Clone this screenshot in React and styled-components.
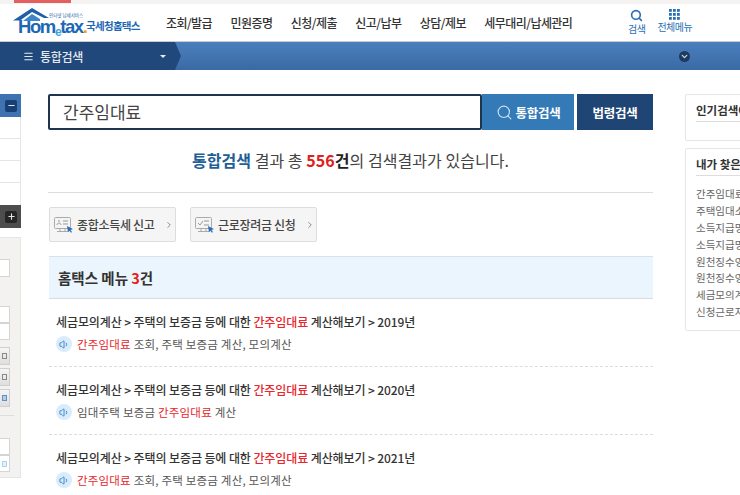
import React from "react";
import styled, { createGlobalStyle } from "styled-components";
import { Search, Menu, ChevronDown, ChevronRight, Plus, Minus, Volume1 } from "lucide-react";

const GlobalStyle = createGlobalStyle`
  html, body {
    margin: 0;
    height: 495px;
    overflow: hidden;
    background: #fff;
    font-family: "Noto Sans CJK KR", "Noto Sans", sans-serif;
    color: #333;
  }
  * { box-sizing: border-box; }
`;

const menus = ["조회/발급", "민원증명", "신청/제출", "신고/납부", "상담/제보", "세무대리/납세관리"];
const recent = ["간주임대료", "주택임대소득", "소득지급명세서", "소득지급명세서", "원천징수영수증", "원천징수영수증", "세금모의계산", "신청근로자녀"];

const results = [
  { year: 2019, sub: <><Hit>간주임대료</Hit> 조회, 주택 보증금 계산, 모의계산</> },
  { year: 2020, sub: <>임대주택 보증금 <Hit>간주임대료</Hit> 계산</> },
  { year: 2021, sub: <><Hit>간주임대료</Hit> 조회, 주택 보증금 계산, 모의계산</> },
];

function Hit({ children }) {
  return <HitText>{children}</HitText>;
}

function MonitorIcon({ check }) {
  return (
    <svg width="19" height="16" viewBox="0 0 19 16">
      <rect x="0.500" y="0.500" width="16" height="11" rx="1" fill="#f4f4f4" stroke="#aaa" />
      <path d="M6 12v2M11 12v2M3 14.500h11" stroke="#aaa" fill="none" />
      {check ? (
        <path d="M3 6l2 2 3-4M9 4h5M9 8h5" stroke="#999" fill="none" />
      ) : (
        <path d="M3 8c0-2.500 4-2.500 4 0M9 4h5M9 7h5M4 4h2" stroke="#999" fill="none" />
      )}
      <path d="M13 9l6 3-2.500 1 1.500 2-1 .800-1.500-2-1.500 1.500z" fill="#2b6cb5" />
    </svg>
  );
}

export default function App() {
  return (
    <>
      <GlobalStyle />
      <TopStrip><RedTab /></TopStrip>

      <Header>
        <Logo>
          <LogoMark>
            <svg width="36" height="13" viewBox="0 0 36 13">
              <path d="M0 12.500L19 0l17 10h-5L19 4 7 12.500z" fill="#1f5fa8" />
              <path d="M10 13l9-7 8 5v2z" fill="#3f86c8" />
            </svg>
            <LogoSlogan>인터넷 납세서비스</LogoSlogan>
          </LogoMark>
          <LogoWord>Hom<LogoE>e</LogoE>tax<LogoDot>.</LogoDot></LogoWord>
          <LogoName>국세청홈택스</LogoName>
        </Logo>
        <MainMenu>
          {menus.map((m) => <MenuItem key={m}>{m}</MenuItem>)}
        </MainMenu>
        <Tools>
          <Tool>
            <Search size={13} strokeWidth={3} />
            <span>검색</span>
          </Tool>
          <Tool>
            <svg width="11" height="11" viewBox="0 0 11 11" fill="#2a6fb5">
              {[0, 4, 8].map((y) =>
                [0, 4, 8].map((x) => <rect key={`${x}-${y}`} x={x} y={y} width="2.800" height="2.800" />)
              )}
            </svg>
            <span>전체메뉴</span>
          </Tool>
        </Tools>
      </Header>

      <NavBar>
        <NavTab>
          <Menu size={11} strokeWidth={2.5} />
          <NavTitle>통합검색</NavTitle>
          <NavCaret />
        </NavTab>
        <NavToggle><ChevronDown size={9} strokeWidth={3.5} /></NavToggle>
      </NavBar>

      <Page>
        <LeftRail>
          <LeftCard>
            <RailHead><RailButton><Minus size={9} strokeWidth={3} /></RailButton></RailHead>
            <RailRow /><RailRow /><RailRow /><RailRow $last />
            <RailDark><RailButton $dark><Plus size={9} strokeWidth={3} /></RailButton></RailDark>
            <FilterBox>
              <FilterInput />
              <FilterPair $top={29}><FilterInput /><FilterInput /></FilterPair>
              <FilterButtons>
                <FilterBtn><BtnGlyph $color="#888" /></FilterBtn>
                <FilterBtn><BtnGlyph $color="#888" /></FilterBtn>
                <FilterBtn><BtnGlyph $color="#5b93c9" /></FilterBtn>
              </FilterButtons>
              <FilterRule />
              <FilterPair $top={22}>
                <FilterInput />
                <FilterInput><BtnGlyph $color="#a8d8f5" /></FilterInput>
              </FilterPair>
            </FilterBox>
          </LeftCard>
        </LeftRail>

        <Center>
          <SearchRow>
            <SearchField>간주임대료</SearchField>
            <SearchBtn>
              <Search size={17} strokeWidth={1.6} color="#cfe0f2" />
              통합검색
            </SearchBtn>
            <LawBtn>법령검색</LawBtn>
          </SearchRow>

          <Summary>
            <SummaryKey>통합검색</SummaryKey> 결과 총 <SummaryCount>556</SummaryCount><b>건</b>의 검색결과가 있습니다.
          </Summary>

          <ShortcutRow>
            <Shortcut>
              <MonitorIcon />
              <span>종합소득세 신고</span>
              <ChevronRight size={10} color="#777" />
            </Shortcut>
            <Shortcut>
              <MonitorIcon check />
              <span>근로장려금 신청</span>
              <ChevronRight size={10} color="#777" />
            </Shortcut>
          </ShortcutRow>

          <SectionHead>홈택스 메뉴 <SectionCount>3</SectionCount>건</SectionHead>

          {results.map((r) => (
            <ResultItem key={r.year}>
              <ResultTitle>
                세금모의계산 &gt; 주택의 보증금 등에 대한 <Hit>간주임대료</Hit> 계산해보기 &gt; {r.year}년
              </ResultTitle>
              <ResultSub>
                <SoundBadge><Volume1 size={11} /></SoundBadge>
                <span>{r.sub}</span>
              </ResultSub>
            </ResultItem>
          ))}
        </Center>

        <RightRail>
          <SideCard $height={47}>
            <SideTitle>인기검색어</SideTitle>
          </SideCard>
          <SideCard $height={183}>
            <SideTitle>내가 찾은 검색어</SideTitle>
            <RecentList>
              {recent.map((t, i) => <RecentItem key={i}>{t}</RecentItem>)}
            </RecentList>
          </SideCard>
        </RightRail>
      </Page>
    </>
  );
}

const TopStrip = styled.div`
  height: 4px;
  background: #f4f3f2;
`;
const RedTab = styled.div`
  width: 57px;
  height: 3px;
  margin-left: 14px;
  background: #e4605f;
`;

const Header = styled.header`
  display: flex;
  align-items: center;
  height: 38px;
  border-bottom: 1px solid #c9ccd0;
  background: #fff;
`;
const Logo = styled.div`
  position: relative;
  width: 166px;
  height: 37px;
  flex: none;
  padding: 15px 0 0 18px;
  display: flex;
  align-items: flex-start;
`;
const LogoMark = styled.div`
  position: absolute;
  left: 13px;
  top: 4px;
  display: flex;
`;
const LogoSlogan = styled.span`
  position: absolute;
  left: 36px;
  top: 5px;
  font-size: 4.500px;
  line-height: 5px;
  color: #1f5fa8;
  white-space: nowrap;
`;
const LogoWord = styled.span`
  font-family: "Liberation Sans", sans-serif;
  font-weight: 700;
  font-size: 18.500px;
  letter-spacing: -1.4px;
  color: #1d68b5;
  line-height: 16px;
  white-space: nowrap;
`;
const LogoE = styled.span`
  color: #3da5dc;
  font-size: 12px;
  position: relative;
  top: 3px;
`;
const LogoDot = styled.span`
  color: #f0a020;
`;
const LogoName = styled.span`
  position: absolute;
  left: 86px;
  top: 15px;
  font-size: 10.500px;
  line-height: 14px;
  font-weight: 700;
  letter-spacing: -0.7px;
  color: #1d68b5;
  white-space: nowrap;
`;
const MainMenu = styled.nav`
  display: flex;
  gap: 18.400px;
  flex: none;
  width: 424px;
`;
const MenuItem = styled.a`
  font-size: 12px;
  font-weight: 500;
  letter-spacing: -0.55px;
  color: #333;
  white-space: nowrap;
`;
const Tools = styled.div`
  display: flex;
  gap: 12px;
  margin: 0 0 2px 38px;
`;
const Tool = styled.div`
  display: flex;
  flex-direction: column;
  align-items: center;
  gap: 1px;
  color: #2a6fb5;
  font-size: 10px;
  line-height: 12px;
  letter-spacing: -0.5px;
  white-space: nowrap;
`;

const NavBar = styled.div`
  display: flex;
  align-items: center;
  justify-content: space-between;
  height: 28px;
  padding-right: 50px;
  background: linear-gradient(#4a7fbb, #3a6aa6);
`;
const NavTab = styled.div`
  display: flex;
  align-items: center;
  width: 181px;
  height: 100%;
  padding: 0 15px 0 23px;
  color: #e4e9f0;
  background: #20487a;
  clip-path: polygon(0 0, 175px 0, 100% 50%, 175px 100%, 0 100%);
`;
const NavTitle = styled.span`
  margin-left: 6px;
  font-size: 12px;
  font-weight: 500;
  letter-spacing: -0.3px;
  flex: 1;
`;
const NavCaret = styled.span`
  width: 0;
  height: 0;
  border-left: 3px solid transparent;
  border-right: 3px solid transparent;
  border-top: 3px solid #e8edf3;
`;
const NavToggle = styled.span`
  display: flex;
  align-items: center;
  justify-content: center;
  width: 11px;
  height: 11px;
  border-radius: 50%;
  background: #1f3a60;
  color: #c8d4e3;
`;

const Page = styled.main`
  display: flex;
  padding-top: 24px;
`;

const LeftRail = styled.aside`
  width: 48px;
  flex: none;
  overflow: hidden;
`;
const LeftCard = styled.div`
  width: 21px;
  overflow: hidden;
`;
const RailHead = styled.div`
  display: flex;
  justify-content: flex-end;
  align-items: center;
  height: 23px;
  padding-right: 4px;
  background: #3f72b0;
`;
const RailButton = styled.span`
  display: flex;
  align-items: center;
  justify-content: center;
  width: 12px;
  height: 12px;
  border-radius: 2px;
  background: ${(p) => (p.$dark ? "#262626" : "#173f76")};
  color: #dfe6ef;
`;
const RailRow = styled.div`
  height: 22px;
  border-right: 1px solid #e5e5e5;
  border-bottom: ${(p) => (p.$last ? "none" : "1px solid #e5e5e5")};
`;
const RailDark = styled.div`
  display: flex;
  justify-content: flex-end;
  align-items: center;
  height: 23px;
  padding-right: 4px;
  background: #4d4d4d;
`;
const FilterBox = styled.div`
  height: 241px;
  margin-top: 9px;
  padding-top: 21px;
  background: #f3f2f1;
  border: 1px solid #e6e5e3;
  border-left: none;
  padding-right: 10px;
`;
const FilterInput = styled.div`
  display: flex;
  justify-content: flex-end;
  align-items: center;
  height: 18px;
  padding-right: 2px;
  background: #fff;
  border: 1px solid #d5d5d5;
  border-left: none;
`;
const FilterPair = styled.div`
  margin-top: ${(p) => p.$top}px;
  display: flex;
  flex-direction: column;
  > * { height: 17px; }
`;
const FilterButtons = styled.div`
  display: flex;
  flex-direction: column;
  gap: 3px;
  margin-top: 7px;
`;
const FilterBtn = styled.div`
  display: flex;
  justify-content: flex-end;
  align-items: center;
  height: 18px;
  padding-right: 2px;
  background: linear-gradient(#f5f5f5, #dedede);
  border: 1px solid #cfcfcf;
  border-left: none;
`;
const BtnGlyph = styled.span`
  width: 5px;
  height: 6px;
  border: 1px solid ${(p) => p.$color};
  background: ${(p) => p.$color}55;
`;
const FilterRule = styled.div`
  height: 1px;
  margin: 8px -4px 0 0;
  background: #dddddd;
`;

const Center = styled.section`
  width: 605px;
  flex: none;
`;
const SearchRow = styled.div`
  display: flex;
  height: 36px;
`;
const SearchField = styled.div`
  width: 434px;
  padding-left: 13px;
  border: 2px solid #1e3550;
  border-radius: 2px;
  font-size: 17px;
  line-height: 32px;
  color: #444;
`;
const SearchBtn = styled.button`
  display: flex;
  align-items: center;
  justify-content: center;
  gap: 3px;
  width: 92px;
  margin: 0 3px 0 0;
  border: none;
  background: #337ab7;
  color: #fff;
  font: 700 12.500px "Noto Sans CJK KR", sans-serif;
  letter-spacing: -0.3px;
`;
const LawBtn = styled.button`
  width: 76px;
  border: none;
  background: #1f4575;
  color: #fff;
  font: 700 12.500px "Noto Sans CJK KR", sans-serif;
  letter-spacing: -0.3px;
`;
const Summary = styled.p`
  height: 63px;
  margin: 0;
  padding-top: 19px;
  border-bottom: 1px solid #ddd;
  text-align: center;
  font-size: 16px;
  line-height: 23px;
  letter-spacing: 0.05px;
  color: #444;
  b { font-weight: 700; color: #222; }
`;
const SummaryKey = styled.b`
  && { color: #1f5f96; }
`;
const SummaryCount = styled.b`
  && { color: #e02020; }
`;
const ShortcutRow = styled.div`
  display: flex;
  gap: 14px;
  margin: 14px 0 14px 1px;
`;
const Shortcut = styled.a`
  display: flex;
  align-items: center;
  gap: 4px;
  width: 127px;
  height: 35px;
  padding-left: 4px;
  background: #f5f5f5;
  border: 1px solid #ddd;
  border-radius: 2px;
  font-size: 12px;
  font-weight: 500;
  letter-spacing: -0.3px;
  color: #444;
  white-space: nowrap;
  svg:last-child { margin-left: 5px; }
`;
const SectionHead = styled.h2`
  height: 43px;
  margin: 0 0 0 1px;
  padding-left: 9px;
  border-top: 1px solid #d6e2ee;
  border-bottom: 1px solid #d6dde5;
  background: #eaf5fd;
  font-size: 14.500px;
  font-weight: 700;
  line-height: 41px;
  color: #333;
`;
const SectionCount = styled.span`
  color: #e02020;
`;
const HitText = styled.span`
  color: #e8262b;
`;
const ResultItem = styled.article`
  height: 68px;
  margin-left: 1px;
  padding: 14px 0 0 7px;
  border-bottom: 1px dashed #ddd;
  &:last-child { border-bottom: none; }
`;
const ResultTitle = styled.div`
  font-size: 12px;
  font-weight: 500;
  line-height: 18px;
  letter-spacing: -0.1px;
  color: #333;
  white-space: nowrap;
`;
const ResultSub = styled.div`
  display: flex;
  align-items: center;
  gap: 5px;
  margin-top: 4px;
  font-size: 11.500px;
  line-height: 18px;
  letter-spacing: 0.2px;
  color: #555;
  white-space: nowrap;
`;
const SoundBadge = styled.span`
  display: flex;
  align-items: center;
  justify-content: center;
  width: 16px;
  height: 16px;
  border-radius: 50%;
  background: #d8ecfb;
  color: #3a7fbf;
`;

const RightRail = styled.aside`
  display: flex;
  flex-direction: column;
  gap: 7px;
  margin-left: 32px;
  width: 80px;
  flex: none;
`;
const SideCard = styled.div`
  height: ${(p) => p.$height}px;
  padding: 7px 0 0 10px;
  border: 1px solid #e6e6e6;
  border-radius: 2px;
  overflow: hidden;
  white-space: nowrap;
`;
const SideTitle = styled.h3`
  margin: 0;
  height: 20px;
  font-size: 11.500px;
  font-weight: 700;
  line-height: 17px;
  border-bottom: 1px solid #ddd;
  color: #333;
`;
const RecentList = styled.ul`
  list-style: none;
  margin: 9px 0 0;
  padding: 0;
`;
const RecentItem = styled.li`
  height: 16.900px;
  font-size: 10.500px;
  line-height: 17px;
  color: #666;
`;
